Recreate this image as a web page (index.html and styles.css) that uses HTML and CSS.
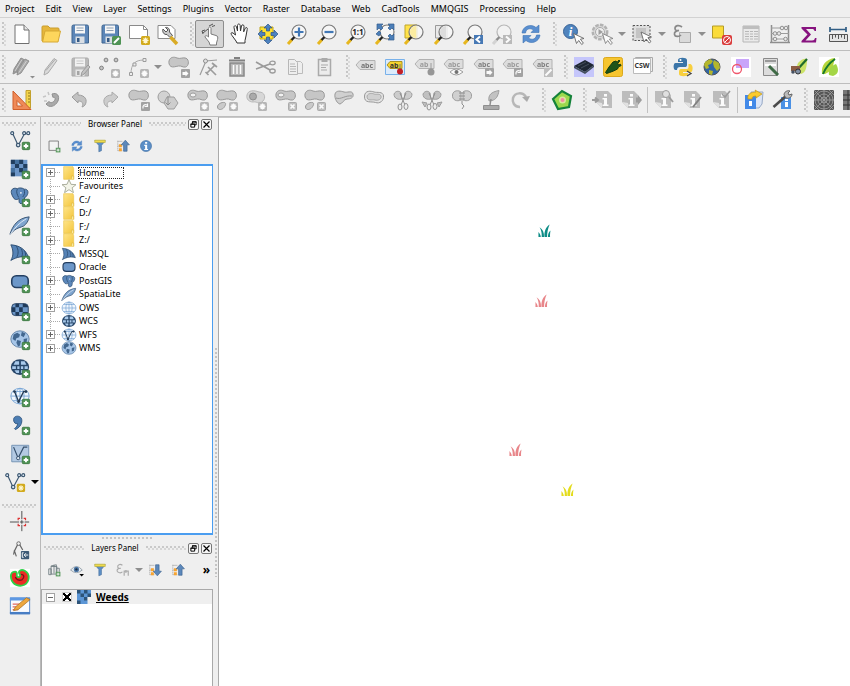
FILE: index.html
```html
<!DOCTYPE html>
<html lang="en">
<head>
<meta charset="utf-8">
<meta name="viewport" content="width=device-width, initial-scale=1">
<title>Weeds</title>
<link rel="stylesheet" href="styles.css">
</head>
<body>
<svg class="sprite" aria-hidden="true">
  <defs>
    <linearGradient id="gold" x1="0" y1="0" x2="1" y2="1"><stop offset="0" stop-color="#ffe58a"/><stop offset="1" stop-color="#f3c53c"/></linearGradient>
    <!-- badges -->
    <g id="plus"><rect x="14.500" y="14.500" width="8" height="8" rx="1" fill="#4f9355" stroke="#3c7a42"/><path d="M18.500 16v5M16 18.500h5" stroke="#fff" stroke-width="2"/></g>
    <g id="star"><rect x="14" y="14" width="9" height="9" rx="1.500" fill="#d2aa1c"/><path d="M18.500 15.500v6M15.500 18.500h6M16.500 16.500l4 4M20.500 16.500l-4 4" stroke="#fff6cf" stroke-width="1.200"/></g>
    <g id="star-off"><rect x="14" y="14" width="9" height="9" rx="1.500" fill="#a8a8a8"/><path d="M18.500 15.500v6M15.500 18.500h6M16.500 16.500l4 4M20.500 16.500l-4 4" stroke="#fff" stroke-width="1.500"/></g>
    <g id="cross-off"><rect x="14.500" y="14.500" width="8" height="8" rx="1" fill="#b4b4b4" stroke="#999"/><path d="M16.500 16.500l4 4M20.500 16.500l-4 4" stroke="#fff" stroke-width="1.700"/></g>
    <g id="move-off"><rect x="14" y="14" width="9" height="9" rx="1" fill="#8f8f8f"/><path d="M15.500 17h3v-1.500l3 3-3 3V20h-3z" fill="#fff"/></g>
    <g id="turn-off"><rect x="14" y="14" width="9" height="9" rx="1" fill="#8f8f8f"/><path d="M16 20.500c-.5-3 1.500-4.500 4-3.500M20.500 15.500v3h-3" fill="none" stroke="#fff" stroke-width="1.200"/></g>
    <!-- editing -->
    <g id="blob"><path d="M2 6c1-4 5-4.500 8-3 3 1.300 6-1 9 .2 3.500 1.500 3 8-.5 8.800-3 .6-4-1.500-7-1-3.500.6-5.500 1.500-7.500.5C2.300 10.500 1.500 8 2 6z" fill="#bdbdbd" stroke="#828282"/></g>
    <g id="lobe"><path d="M2.500 19c0-3 4-5 7-4.500 2 .5 1 3-.5 5s-6 3.500-6.500-.5z" fill="#c2c2c2" stroke="#828282"/></g>
    <g id="doc-i"><path d="M4 3h12l4 4v13H10l-6-6z" fill="#b0b0b0"/><path d="M4 14l6 6v-5z" fill="#dedede"/><path d="M12 6h3v2.500h-3zM10.500 10H15v6.500h1.500V18h-6v-1.500H12V11.500h-1.500z" fill="#fff"/></g>
    <g id="tag"><path d="M2 11l4-4.500h15v9H6z" fill="#d9d9d9" stroke="#a2a2a2"/></g>
    <g id="ptr"><path d="M0 0l3 10 2.200-3 3 4 1.700-1.300-3-4L10.500 5z" fill="#fff" stroke="#666" stroke-width=".9"/></g>
    <!-- map navigation -->
    <g id="grip-lens"><path d="M3 22l4-4.500" stroke="#e7b71e" stroke-width="3"/><path d="M6.500 18l3-3" stroke="#222" stroke-width="2.400"/></g>
    <g id="lens"><circle cx="14" cy="10" r="7" fill="#f7f7f7" fill-opacity=".8" stroke="#7b7b7b" stroke-width="1.200"/><use href="#grip-lens"/></g>
    <g id="floppy"><path d="M4 4.500q0-1.500 1.500-1.500H19q1.500 0 1.500 1.500V21H4z" fill="#5c86b8" stroke="#3f658f"/><path d="M7 3.500h10v8H7z" fill="#f6f6f6"/><path d="M8.500 6h7M8.500 8.500h7" stroke="#8fa1b4"/><path d="M7.500 14.500h9V21h-9z" fill="#d9dee4"/><path d="M9 16h2.500v4H9z" fill="#355a85"/></g>
    <g id="refresh" fill="#5a8fd0" stroke="#3e74b4" stroke-width=".6"><path d="M3 11C3.500 4.500 11.500 1 17 5.500L20 3v7.500h-8l2.500-2.500C11 5.500 7 7 6.500 11z"/><path d="M21 13c-.5 6.500-8.500 10-14 5.500L4 21v-7.500h8L9.500 16c3.500 2.500 7.500 1 8-3z"/></g>
    <!-- data sources -->
    <g id="vector" fill="none" stroke="#3e5871" stroke-width="1.300"><path d="M4 5l6 13L17 5h3"/><g fill="#dce8f3"><circle cx="3.500" cy="4.500" r="1.600"/><circle cx="10" cy="17.500" r="1.900"/><circle cx="16.500" cy="4.500" r="1.600"/><circle cx="21" cy="4.500" r="1.600"/></g></g>
    <g id="raster"><path d="M2 2h18v18H2z" fill="#6d96c8"/><path d="M2 2h4.500v4.500H2zM11 2h4.500v4.500H11zM6.500 6.500H11V11H6.500zM15.500 6.500H20V11h-4.500zM11 11h4.500v4.500H11zM2 15.500h4.500V20H2z" fill="#213e5f"/><path d="M6.500 2H11v4.500H6.500zM2 11h4.500v4.500H2zM15.500 11H20v4.500h-4.500z" fill="#45719f"/></g>
    <g id="elephant"><path d="M2.500 7C2 3 6 1.500 9 3c2-1.500 6-1 7.500.5 4-.5 5 3 3.500 6-.8 2-2 3-3 3l-.3 3.500c-.2 4-6 4.500-5.700.5v-3c-1.500 1.500-4.500 2-6-.5C3.800 11 2.800 9.500 2.500 7z" fill="#5c88bb" stroke="#2c4b6e"/><path d="M9 3.500c-1.500 3 0 6 1.500 9M16.500 4c1 3 .5 5.500-1.500 8" fill="none" stroke="#2c4b6e"/><circle cx="13" cy="7.500" r=".9" fill="#fff"/></g>
    <g id="feather"><path d="M1 21C4 12 9 3.500 22 2c-.5 4-3 8-6 10-3 1.500-7 2-10 4.500z" fill="#7fa5cf" stroke="#34506f"/><path d="M1.500 21C6 14 12 8 19 4" fill="none" stroke="#e6eff8"/></g>
    <g id="sail"><path d="M2 2c9 .5 16 4.500 19.500 14C15 14 9 15 2 19c3-5 3-11 0-17z" fill="#5683b6" stroke="#2c4b6e"/><path d="M8 3.500c2.500 4 2.500 8 .5 12M13 6c2 3 2 6 1 9M17 9c1.200 2 1.200 4 1 6" fill="none" stroke="#2c4b6e"/></g>
    <g id="oracle"><rect x="3" y="4" width="18" height="13" rx="5" fill="#6c97c9" stroke="#243f61" stroke-width="1.700"/></g>
    <g id="georaster"><rect x="3" y="4" width="18" height="13" rx="4" fill="#6c97c9" stroke="#243f61"/><path d="M7 4h4v4H7zM15 4h3l3 3v1h-6zM3 8h4v5H3zM11 8h4v5h-4zM7 13h4v4H7zM15 13h6l-3 4h-3z" fill="#1f3a5a"/></g>
    <g id="world"><ellipse cx="12" cy="11" rx="10" ry="9" fill="#a7c6e8" stroke="#6283a6"/><path d="M5 6l4-2 3 2-1 3-3 1-1 3-3-2zM14 3l4 2-2 4-3-2zM9 12l4 1-1 5-2 1-2-4zM16 11l4-1-1 5-3 1z" fill="#42678f"/></g>
    <g id="globe-dark"><ellipse cx="12" cy="11" rx="10" ry="8.500" fill="#29486b"/><path d="M7 4.500h4v4H5zM13 4.500h4l2 4h-6zM3.500 10h4v3h-4zM9 10h2.500v3H9zM13 10h2.500v3H13zM17 10h3.500v3H17zM6 14.500h5v3H8zM13 14.500h5l-2 3h-3z" fill="#a9caec"/></g>
    <g id="globe-light" fill="none" stroke="#79a5d4"><ellipse cx="12" cy="11" rx="10" ry="8.500" fill="#f1f7fd"/><ellipse cx="12" cy="11" rx="4.500" ry="8.500"/><path d="M2 11h20M4.500 6h15M4.500 16h15M12 2.500v17"/></g>
    <g id="globe-v"><use href="#globe-light"/><path d="M6 6l4.500 11L16 6h3" fill="none" stroke="#253c55" stroke-width="1.400"/><circle cx="6" cy="6" r="1.500" fill="#253c55"/><circle cx="10.500" cy="17" r="1.500" fill="#253c55"/><circle cx="18.500" cy="6" r="1.500" fill="#253c55"/></g>
    <g id="folder"><path d="M4 1h14l1 3v16H4z" fill="url(#gold)" stroke="#ecc64c"/><path d="M16 19v-4h3v5" fill="#fff0a8" stroke="#e0b63a"/></g>
    <g id="funnel"><path d="M3 3h18l-6.500 8v9L10 22V11z" fill="#5d8fc6" stroke="#466f9b"/><path d="M3 2h18v4H3z" fill="#efdc4b" stroke="#b9a93a"/></g>
    <g id="rows"><path d="M3 3v18" stroke="#8c8c8c" stroke-dasharray="2 1"/><path d="M3 4h8M3 12h8M3 20h8" stroke="#9a9a9a"/><path d="M5 9h5v5H5zM5 16h5v5H5z" fill="#f7a430"/></g>
    <g id="grass"><path d="M.5 14V8.500C2 10 3 12 3 14zM4 14c.2-4-.3-7-2.300-10.500C5 5.500 6.700 9 6.500 14zM7 14C6.500 8 8.500 3 12.500.5 10.700 5 9.800 9 9.800 14zM10.700 14c0-3 .8-5.500 2.800-7-.5 2.500-.6 5-.5 7z"/></g>
  </defs>
</svg>

<nav class="menubar" aria-label="Main menu">
  <button type="button">Project</button><button type="button">Edit</button><button type="button">View</button><button type="button">Layer</button><button type="button">Settings</button><button type="button">Plugins</button><button type="button">Vector</button><button type="button">Raster</button><button type="button">Database</button><button type="button">Web</button><button type="button">CadTools</button><button type="button">MMQGIS</button><button type="button">Processing</button><button type="button">Help</button>
</nav>

<div class="toolbar-row" role="toolbar" aria-label="Project and navigation">
  <span class="handle"></span>
  <div class="tools tools-file">
    <button class="tool" type="button" aria-label="New"><svg viewBox="0 0 24 24"><path d="M5 3h9l5 5v13.500H5z" fill="#fff" stroke="#707070"/><path d="M14 3v5h5" fill="#e5e5e5" stroke="#707070"/></svg></button>
    <button class="tool" type="button" aria-label="Open"><svg viewBox="0 0 24 24"><path d="M3 19V5q0-1 1-1h5l2 2h8q1 0 1 1v3z" fill="#e6b63c" stroke="#c99d2c"/><path d="M6 9h15.500L19 20H3.500z" fill="#fdd65c" stroke="#d6a934"/></svg></button>
    <button class="tool" type="button" aria-label="Save"><svg viewBox="0 0 24 24"><use href="#floppy"/></svg></button>
    <button class="tool" type="button" aria-label="Save as"><svg viewBox="0 0 24 24"><use href="#floppy"/><rect x="14" y="14" width="9" height="9" rx="1.500" fill="#4f9355"/><path d="M16 21l5-5" stroke="#fff" stroke-width="2"/></svg></button>
    <button class="tool" type="button" aria-label="New print layout"><svg viewBox="0 0 24 24"><path d="M2.500 3.500h14l4 4v9h-18z" fill="#fff" stroke="#8a8a8a"/><path d="M16.500 3.500v4h4" fill="none" stroke="#8a8a8a"/><use href="#star"/></svg></button>
    <button class="tool" type="button" aria-label="Layout manager"><svg viewBox="0 0 24 24"><path d="M2 3.500h13l4 4v9H2z" fill="#fff" stroke="#8a8a8a"/><path d="M7 7c-1 3 1 6 4 5.500l3 3 2.500-2-3-3.500C14 7 12 5 9.500 5.500L12 8l-2 2z" fill="#c9c9c9" stroke="#555"/><path d="M14.500 15l6.500 7" stroke="#d9ab26" stroke-width="3.500"/></svg></button>
  </div>
  <span class="handle"></span>
  <div class="tools tools-navigation">
    <button class="tool is-active" type="button" aria-label="Touch zoom" aria-pressed="true"><svg viewBox="0 0 24 24"><path d="M5 11l5-4M11 4l4-2M7 8l-3 1 1 3M14 4.500l3-1" stroke="#555" fill="none"/><path d="M11 20l-4-5c0-2 2-1.500 3.500 0V6.500c0-2 2.500-2 2.500 0V12l5 1.500c2 .5 2 2 1.500 4L18.500 21v2H12z" fill="#fff" stroke="#7c7c7c"/></svg></button>
    <button class="tool" type="button" aria-label="Pan"><svg viewBox="0 0 24 24"><path d="M9 19l-4-5.500C3.500 11.500 4 10 6 11l2.500 2L7 5.500c-.3-2 2-2.500 2.500-.5L10.500 9V3.500c0-2 2.500-2 2.700 0L13.500 9l1-5c.3-1.800 2.500-1.500 2.500.3l-.3 5.500 1.500-3.500c1-1.500 2.600-.6 2 1.200L19 14l-1 4.500V21H10z" fill="#fff" stroke="#333"/></svg></button>
    <button class="tool" type="button" aria-label="Pan to selection"><svg viewBox="0 0 24 24"><path d="M4 5h13v12H4z" fill="#ffe12f" stroke="#bda31a"/><path d="M12 2l4 4h-2.500v3h-3V6H8zM12 22l-4-4h2.500v-3h3v3H16zM2 12l4-4v2.500h3v3H6V16zM22 12l-4 4v-2.500h-3v-3h3V8z" fill="#4d82c0" stroke="#2e5587" stroke-width=".7"/></svg></button>
    <button class="tool" type="button" aria-label="Zoom in"><svg viewBox="0 0 24 24"><use href="#lens"/><path d="M14 5.500v9M9.500 10h9" stroke="#4177b5" stroke-width="2.200"/></svg></button>
    <button class="tool" type="button" aria-label="Zoom out"><svg viewBox="0 0 24 24"><use href="#lens"/><path d="M9.500 10h9" stroke="#4177b5" stroke-width="2.200"/></svg></button>
    <button class="tool" type="button" aria-label="Zoom to native resolution"><svg viewBox="0 0 24 24"><use href="#lens"/><text x="14" y="13" class="glyph glyph-bold" font-size="8" text-anchor="middle" fill="#222">1:1</text></svg></button>
    <button class="tool" type="button" aria-label="Zoom full"><svg viewBox="0 0 24 24"><use href="#lens"/><path d="M4 2h6L8 4l2 2-2 2-2-2-2 2zM21 2v6l-2-2-2 2-2-2 2-2-2-2zM21 18h-6l2-2-2-2 2-2 2 2 2-2zM3 12l3-3 2 2-2 3z" fill="#4b7eb8" stroke="#335d8e" stroke-width=".7"/></svg></button>
    <button class="tool" type="button" aria-label="Zoom to selection"><svg viewBox="0 0 24 24"><path d="M3 3h12v13H3z" fill="#ffe24a" stroke="#bfa52a"/><use href="#lens"/><path d="M8 10a6 6 0 0 1 6-6v12a6 6 0 0 1-6-6" fill="#fbeca0"/></svg></button>
    <button class="tool" type="button" aria-label="Zoom to layer"><svg viewBox="0 0 24 24"><path d="M3.500 3.500H15V16H3.500z" fill="#e9e9e9" stroke="#9a9a9a"/><use href="#lens"/><path d="M8 10a6 6 0 0 1 6-6v12a6 6 0 0 1-6-6" fill="#dcdcdc"/></svg></button>
    <button class="tool" type="button" aria-label="Zoom last"><svg viewBox="0 0 24 24"><use href="#lens"/><path d="M13 13h9v9h-9z" fill="#4779b5"/><path d="M19 14.500l-3.500 3L19 20.500" stroke="#fff" stroke-width="2" fill="none"/></svg></button>
    <button class="tool" type="button" aria-label="Zoom next" disabled><svg viewBox="0 0 24 24"><use href="#lens" class="faded"/><path d="M13 13h9v9h-9z" fill="#acacac"/><path d="M16 14.500l3.500 3-3.500 3" stroke="#fff" stroke-width="2" fill="none"/></svg></button>
    <button class="tool" type="button" aria-label="Refresh"><svg viewBox="0 0 24 24"><use href="#refresh"/></svg></button>
  </div>
  <span class="handle"></span>
  <div class="tools">
    <button class="tool" type="button" aria-label="Identify"><svg viewBox="0 0 24 24"><circle cx="9.500" cy="9.500" r="7" fill="#4f84be" stroke="#3a6496"/><text x="9.500" y="14" class="glyph-serif" text-anchor="middle" fill="#fff">i</text><use href="#ptr" x="12.500" y="11.500"/></svg></button>
    <button class="tool" type="button" aria-label="Run action" disabled><svg viewBox="0 0 24 24"><circle cx="10" cy="10" r="7.200" fill="#d7d7d7" stroke="#a4a4a4" stroke-width="2.500" stroke-dasharray="3.600 1.200"/><circle cx="10" cy="10" r="4.500" fill="#eee" stroke="#999"/><path d="M8.500 7l4.500 3-4.500 3z" fill="#8b8b8b"/><use href="#ptr" x="12.500" y="11.500"/></svg></button>
    <button class="drop" type="button" aria-label="Actions" disabled></button>
    <button class="tool" type="button" aria-label="Select features"><svg viewBox="0 0 24 24"><path d="M3 3.500h17v15H3z" fill="#ddd" stroke="#555" stroke-dasharray="2 1.500"/><path d="M6 6h10v10H6z" fill="#c4c4c4"/><use href="#ptr" x="11" y="10"/></svg></button>
    <button class="drop" type="button" aria-label="Selection tools"></button>
    <button class="tool" type="button" aria-label="Select by expression"><svg viewBox="0 0 24 24"><path d="M9.500 10.500h11v10h-11z" fill="#dadada" stroke="#aaa"/><path d="M12 5c-3-2.500-7-1.500-7 1.500C5 8.500 7 9 9 8.500 6 9 4 10 4.500 12.500 5 15 9 15 11 13" fill="none" stroke="#898989" stroke-width="1.700"/></svg></button>
    <button class="drop" type="button" aria-label="Expression tools"></button>
    <button class="tool" type="button" aria-label="Deselect all"><svg viewBox="0 0 24 24"><path d="M2.500 4h11v12h-11z" fill="#fbdc3a" stroke="#b59c26"/><rect x="12" y="13" width="10" height="10" rx="2" fill="#da3b3b"/><circle cx="17" cy="18" r="3.500" fill="none" stroke="#fff"/><path d="M14.500 20.500l5-5" stroke="#fff"/></svg></button>
    <button class="tool" type="button" aria-label="Attribute table" disabled><svg viewBox="0 0 24 24"><path d="M4 4h16v16H4z" fill="#e9e9e9" stroke="#a9a9a9"/><path d="M4 4h16v3H4z" fill="#b3b3b3"/><path d="M6 9.500h4M11 9.500h3M15 9.500h4M6 12h4M11 12h3M15 12h4M6 14.500h4M11 14.500h3M15 14.500h4M6 17h4M11 17h3M15 17h4" stroke="#aaa"/></svg></button>
    <button class="tool" type="button" aria-label="Field calculator" disabled><svg viewBox="0 0 24 24"><path d="M3.500 3v18M20.500 3v18M2 20.500h20" stroke="#777" stroke-width="1.500"/><path d="M3 6h18M3 11.500h18M3 17h18" stroke="#888"/><g fill="#e6e6e6" stroke="#777"><circle cx="14" cy="6" r="1.800"/><circle cx="18" cy="6" r="1.800"/><circle cx="7" cy="11.500" r="1.800"/><circle cx="11" cy="11.500" r="1.800"/><circle cx="7" cy="17" r="1.800"/><circle cx="17.500" cy="17" r="1.800"/></g></svg></button>
    <button class="tool" type="button" aria-label="Statistics"><svg viewBox="0 0 24 24"><path d="M4.500 5H19v4h-1.500c-.3-1.500-1-2-2.500-2H9l5 5.500L8.500 18.500H15c2 0 2.500-.8 3-2.500h1.500L19 20.500H4.500V19l6-6.500-6-6z" fill="#87137f"/></svg></button>
    <button class="tool" type="button" aria-label="Measure"><svg viewBox="0 0 24 24"><path d="M4 5v5M20 5v5M4 7.500h16" stroke="#315e85" stroke-width="1.700"/><path d="M3.500 12.500h18v7h-18z" fill="#e4e4e4" stroke="#555"/><path d="M6.500 13v4M9.500 13v2.500M12.500 13v4M15.500 13v2.500M18.500 13v4" stroke="#555"/></svg></button>
  </div>
</div>

<div class="toolbar-row" role="toolbar" aria-label="Digitizing and labels">
  <span class="handle"></span>
  <div class="tools tools-digitize">
    <button class="tool" type="button" aria-label="Current edits" disabled><svg viewBox="0 0 24 24"><path d="M3 19l1-5L11 3l3 1.500L7 17z" fill="#888" stroke="#777"/><path d="M7 20l1-5L15 4l4 2-8 12z" fill="#9b9b9b" stroke="#777"/><path d="M12 4.500L5 16M16.500 6L9 17.500" stroke="#c9c9c9"/><path d="M20 21h5l-2.500 2.500z" fill="#777"/></svg></button>
    <button class="tool" type="button" aria-label="Toggle editing" disabled><svg viewBox="0 0 24 24"><path d="M5 20l1-5L15 3.500 18 5.500 9 18z" fill="#d5d5d5" stroke="#999"/><path d="M7 15.500L16 4.500" stroke="#999"/></svg></button>
    <button class="tool" type="button" aria-label="Save edits" disabled><svg viewBox="0 0 24 24"><use href="#floppy" class="grey"/><path d="M13 21l1-4 6-7 2 2-6 7z" fill="#b9b9b9" stroke="#858585"/></svg></button>
    <button class="tool" type="button" aria-label="Add point feature" disabled><svg viewBox="0 0 24 24"><g fill="#bbb" stroke="#666"><circle cx="9" cy="5" r="1.900"/><circle cx="19" cy="5" r="1.900"/><circle cx="4.500" cy="13" r="1.900"/></g><use href="#star-off"/></svg></button>
    <button class="tool" type="button" aria-label="Add circular string" disabled><svg viewBox="0 0 24 24"><path d="M5 19C5 9 9 5 18 5" fill="none" stroke="#999"/><g fill="#eee" stroke="#888"><path d="M3.500 17.500h3v3h-3zM7 8h3v3H7zM17 3.500h3v3h-3z"/></g><use href="#star-off"/></svg></button>
    <button class="drop" type="button" aria-label="Circular string tools" disabled></button>
    <button class="tool" type="button" aria-label="Move feature" disabled><svg viewBox="0 0 24 24"><use href="#blob"/><use href="#move-off"/></svg></button>
    <button class="tool" type="button" aria-label="Node tool" disabled><svg viewBox="0 0 24 24"><path d="M4 20L10 6l11-1M8 5l2 1" fill="none" stroke="#888" stroke-width="1.200"/><circle cx="9.500" cy="6" r="2" fill="#ddd" stroke="#777"/><path d="M12 12l8 8M19 10l-8 8M16 8l5 4M9.500 17l3 3" stroke="#888" stroke-width="1.700"/></svg></button>
    <button class="tool" type="button" aria-label="Delete selected" disabled><svg viewBox="0 0 24 24"><path d="M5 8h14v13H5z" fill="#aaa" stroke="#6f6f6f" stroke-width="1.500"/><path d="M8.500 10v9M12 10v9M15.500 10v9" stroke="#fff" stroke-width="1.500"/><path d="M4 5.500h16M9 3h6" stroke="#666" stroke-width="2"/></svg></button>
    <button class="tool" type="button" aria-label="Cut" disabled><svg viewBox="0 0 24 24"><path d="M2 7l14 8M2 14l14-5" stroke="#858585" stroke-width="1.700"/><ellipse cx="18.500" cy="8" rx="2.700" ry="1.800" fill="none" stroke="#858585" stroke-width="1.300"/><ellipse cx="18.500" cy="16" rx="2.700" ry="2" fill="none" stroke="#858585" stroke-width="1.300"/></svg></button>
    <button class="tool" type="button" aria-label="Copy" disabled><svg viewBox="0 0 24 24"><path d="M10.500 6.500h7l2 2v10h-9z" fill="#eee" stroke="#b0b0b0"/><path d="M5.500 4.500h6l3 3v12h-9z" fill="#eee" stroke="#aaa"/><path d="M7 9h5M7 11.500h6M7 14h6M7 16.500h6" stroke="#aaa"/></svg></button>
    <button class="tool" type="button" aria-label="Paste" disabled><svg viewBox="0 0 24 24"><path d="M6.500 4.500h12v16h-12z" fill="#ececec" stroke="#999" stroke-width="1.500"/><path d="M9.500 3h6v4h-6z" fill="#999"/><path d="M9 10h7M9 12.500h5M9 15h6" stroke="#999"/></svg></button>
  </div>
  <span class="handle"></span>
  <div class="tools tools-labels">
    <button class="tool" type="button" aria-label="Label options" disabled><svg viewBox="0 0 24 24"><g transform="translate(0 -1)"><use href="#tag"/><text x="13" y="13.500" class="glyph glyph-bold" font-size="7" text-anchor="middle" fill="#555">abc</text></g></svg></button>
    <button class="tool" type="button" aria-label="Highlight pinned labels"><svg viewBox="0 0 24 24"><path d="M2.500 4.500h19v15h-19z" fill="#dcebfb" stroke="#78b1ea"/><path d="M4 10l3-3.500h12v7H7z" fill="#f7d52c" stroke="#aa9223"/><text x="11" y="13" class="glyph glyph-bold" font-size="7" text-anchor="middle" fill="#333">ab</text><path d="M17 9v5" stroke="#777"/><circle cx="17" cy="16.500" r="3" fill="#c21f27"/></svg></button>
    <button class="tool" type="button" aria-label="Pin labels" disabled><svg viewBox="0 0 24 24"><g transform="translate(0 -2)"><use href="#tag"/><text x="11" y="13.500" class="glyph glyph-bold" font-size="7" text-anchor="middle" fill="#888">ab</text></g><path d="M18 8v6" stroke="#888"/><circle cx="18" cy="17" r="3.500" fill="#808080"/></svg></button>
    <button class="tool" type="button" aria-label="Show or hide labels" disabled><svg viewBox="0 0 24 24"><g transform="translate(0 -2)"><use href="#tag"/><text x="12" y="13.500" class="glyph glyph-bold" font-size="7" text-anchor="middle" fill="#888">abc</text></g><path d="M8 17q6-6 13 0-7 6-13 0z" fill="#fff" stroke="#888"/><circle cx="14.500" cy="17" r="2" fill="#555"/></svg></button>
    <button class="tool" type="button" aria-label="Move label" disabled><svg viewBox="0 0 24 24"><g transform="translate(0 -2)"><use href="#tag"/><text x="12" y="13.500" class="glyph glyph-bold" font-size="7" text-anchor="middle" fill="#666">abc</text></g><use href="#move-off" x="-1" y="-1"/></svg></button>
    <button class="tool" type="button" aria-label="Rotate label" disabled><svg viewBox="0 0 24 24"><g transform="translate(0 -2)"><use href="#tag"/><text x="12" y="13.500" class="glyph glyph-bold" font-size="7" text-anchor="middle" fill="#888">abc</text></g><use href="#turn-off" x="-1" y="-1"/></svg></button>
    <button class="tool" type="button" aria-label="Change label" disabled><svg viewBox="0 0 24 24"><g transform="translate(0 -2)"><use href="#tag"/><text x="12" y="13.500" class="glyph glyph-bold" font-size="7" text-anchor="middle" fill="#666">abc</text></g><path d="M13 13h9v9h-9z" fill="#b2b2b2"/><path d="M14.500 20.500l6-6" stroke="#fff" stroke-width="2"/></svg></button>
  </div>
  <span class="handle"></span>
  <div class="tools">
    <button class="tool" type="button" aria-label="Terrain plugin"><svg viewBox="0 0 24 24"><path d="M2 2h20v20H2z" fill="#c5c6fb"/><path d="M2 11L13 5l9 5-9 7z" fill="#1e2733"/><path d="M2 11v2l11 6 9-7v-2l-9 7z" fill="#44505e"/><path d="M6 11l8-4M9 13l8-4" stroke="#45505d"/></svg></button>
    <button class="tool" type="button" aria-label="Plugin manager"><svg viewBox="0 0 24 24"><rect x="2.500" y="2.500" width="19" height="19" rx="2" fill="#f6c52f" stroke="#dca91c"/><path d="M8 12l4-5 3-1 1 1.500L18 5l.8 1-2 2.300L17.500 10l2-.7.6 1.300-2.600 1.200-1 2.200-4 2-4 1.500-3 1-1-1z" fill="#1d5419" stroke="#123b10"/></svg></button>
    <button class="tool" type="button" aria-label="Metadata search"><svg viewBox="0 0 24 24"><path d="M5.500 3.500v-1h17v14h-2" fill="none" stroke="#aaa"/><path d="M3.500 3.500h17v15h-17z" fill="#fff" stroke="#bbb"/><text x="12" y="13" class="glyph glyph-bold" font-size="7" text-anchor="middle" fill="#333">CSW</text></svg></button>
  </div>
  <span class="handle"></span>
  <div class="tools tools-plugins">
    <button class="tool" type="button" aria-label="Python console"><svg viewBox="0 0 24 24"><path d="M7 7V5c0-3 9-3 9 0v5c0 1.500-1 2-2 2H9c-2 0-3 1-3 3H4.500C2 15 2 8 4.500 8H12V7z" fill="#3b75a8"/><path d="M8 17v2c0 3 9 3 9 0v-1h-5v-1h8c2 0 2.500-7-.5-8H17.500v3c0 1.500-1 2-2 2H10c-1.500 0-2 1-2 3z" fill="#f8cf3e"/><circle cx="9.500" cy="5" r="1" fill="#fff"/><path d="M16 16l4 2.500-4 2.500" fill="none" stroke="#444" stroke-width="1.300"/></svg></button>
    <button class="tool" type="button" aria-label="Globe"><svg viewBox="0 0 24 24"><circle cx="12" cy="12" r="8" fill="#3166a5" stroke="#555"/><path d="M5 7l5-3 3 2-2 3-3 1 1 3-3 1-2-4zM14 5l5 3 1 5-3 3-3-4-1-4zM9 15l4 1-1 4-3-1z" fill="#b4b62c"/></svg></button>
    <button class="tool" type="button" aria-label="Geometry plugin"><svg viewBox="0 0 24 24"><path d="M2 2h20v20H2z" fill="#fff"/><path d="M7 4h13v9H7z" fill="#c9a5fa"/><circle cx="8" cy="14" r="4.500" fill="none" stroke="#f0566c" stroke-width="1.300"/></svg></button>
    <button class="tool" type="button" aria-label="Form editor"><svg viewBox="0 0 24 24"><path d="M4.500 3.500h14v17h-14z" fill="#dcdcdc" stroke="#8a8a8a"/><path d="M6 5h11v2H6z" fill="#999"/><path d="M6 9h11v2H6z" fill="#fff"/><path d="M10 11l9 9" stroke="#3f6b46" stroke-width="3"/></svg></button>
    <button class="tool" type="button" aria-label="Vehicle plugin"><svg viewBox="0 0 24 24"><path d="M10 8C13 4 17 3 19 4c0 7-1 14-6 15-4-2-5-7-3-11z" fill="#cbe267"/><path d="M19 4L9 15" stroke="#206b2c" stroke-width="2.200"/><path d="M3 11h9v5H3z" fill="#8c5d43"/><circle cx="10" cy="16.500" r="2.500" fill="#8190a5" stroke="#333"/><circle cx="5" cy="17" r="1.800" fill="#455061"/></svg></button>
    <button class="tool" type="button" aria-label="Leaf plugin"><svg viewBox="0 0 24 24"><path d="M2 2h20v20H2z" fill="#fff"/><path d="M5 19C4 10 9 4 18 3 16 9 17 15 8 19z" fill="#b6d63b"/><path d="M12 20c-1-6 2-9 7-11 3 5 3 10-3 12z" fill="#a4d646"/><path d="M18 4C11 9 8 14 6 19" fill="none" stroke="#16792c" stroke-width="2"/></svg></button>
  </div>
</div>

<div class="toolbar-row" role="toolbar" aria-label="Advanced digitizing">
  <span class="handle"></span>
  <div class="tools tools-advanced">
    <button class="tool" type="button" aria-label="CAD tools"><svg viewBox="0 0 24 24"><path d="M16 2.500h4.500V20H16z" fill="#f4d44c" stroke="#c2a12c"/><path d="M18 5h2M18 8h2M18 11h2M18 14h2" stroke="#8d7620"/><path d="M3 3l18 18.500H3zM7 12.500V18h5.500z" fill="#ef8a58" fill-rule="evenodd" stroke="#cf5f2a"/></svg></button>
    <button class="tool" type="button" aria-label="Snapping" disabled><svg viewBox="0 0 24 24"><path d="M13 6c5-2 8 2 6 7-3 6-9 7-12 3l3-2.500c2 2 4 1 5.500-1s0-4-1.500-3z" fill="#999" stroke="#777"/><path d="M4 9l3-1M5 13h3M9 4l1 3" stroke="#bbb" stroke-width="1.500"/></svg></button>
    <button class="tool" type="button" aria-label="Undo" disabled><svg viewBox="0 0 24 24"><path d="M4 9l6-5v3c7 0 10 5 7 10-1 1.500-3 2-3 2 2-4 0-6-4-6v2z" fill="#b7b7b7" stroke="#888"/></svg></button>
    <button class="tool" type="button" aria-label="Redo" disabled><svg viewBox="0 0 24 24"><path d="M20 9l-6-5v3C7 7 4 12 7 17c1 1.500 3 2 3 2-2-4 0-6 4-6v2z" fill="#c5c5c5" stroke="#999"/></svg></button>
    <button class="tool" type="button" aria-label="Rotate feature" disabled><svg viewBox="0 0 24 24"><use href="#blob"/><use href="#turn-off"/></svg></button>
    <button class="tool" type="button" aria-label="Simplify feature" disabled><svg viewBox="0 0 24 24"><circle cx="8" cy="9" r="6" fill="#ccc" stroke="#888"/><path d="M11 9h7l4 6-4 6h-6l-4-6z" fill="#c5c5c5" stroke="#888"/><path d="M12 8v9M9.500 14.500L12 17l2.500-2.500" fill="none" stroke="#777"/></svg></button>
    <button class="tool" type="button" aria-label="Add ring" disabled><svg viewBox="0 0 24 24"><use href="#blob"/><ellipse cx="7" cy="7" rx="3" ry="2" fill="#f3f3f3" stroke="#888"/><use href="#star-off"/></svg></button>
    <button class="tool" type="button" aria-label="Add part" disabled><svg viewBox="0 0 24 24"><use href="#blob"/><use href="#lobe"/><use href="#star-off"/></svg></button>
    <button class="tool" type="button" aria-label="Fill ring" disabled><svg viewBox="0 0 24 24"><path d="M3 7c1-5 7-5 12-3 6 0 7 6 4 9-4 4-7 0-10 1-4 0-7-3-6-7z" fill="#d2d2d2" stroke="#aaa"/><circle cx="9" cy="8.500" r="3.500" fill="#999" stroke="#777"/><use href="#star-off"/></svg></button>
    <button class="tool" type="button" aria-label="Delete ring" disabled><svg viewBox="0 0 24 24"><use href="#blob"/><ellipse cx="7" cy="7" rx="3" ry="2" fill="#f3f3f3" stroke="#888"/><use href="#cross-off"/></svg></button>
    <button class="tool" type="button" aria-label="Delete part" disabled><svg viewBox="0 0 24 24"><use href="#blob"/><use href="#lobe"/><use href="#cross-off"/></svg></button>
    <button class="tool" type="button" aria-label="Reshape" disabled><svg viewBox="0 0 24 24"><path d="M3 6c1-4 6-3 9-2s8-2 9 2-3 5-6 5-5 5-7 5-6-5-5-10z" fill="#c9c9c9" stroke="#828282"/><path d="M4 10c5 2 9-3 16-2" fill="none" stroke="#828282"/></svg></button>
    <button class="tool" type="button" aria-label="Offset curve" disabled><svg viewBox="0 0 24 24"><path d="M2.500 8C3 2 9 3 12 4s9-1 9.500 4-4 8-8 6.500S2 16 2.500 8z" fill="#e2e2e2" stroke="#828282"/><path d="M5 8c1-3 5-3 7-2s6-1 7 2-3 5-6 4-8 2-8-4z" fill="#c9c9c9" stroke="#999"/></svg></button>
    <button class="tool" type="button" aria-label="Split features" disabled><svg viewBox="0 0 24 24"><path d="M3 6c2-4 6-3 7-1l1 6c-3 1-8 0-8-5zM21 6c-2-4-6-3-7-1l-1 6c3 1 8 0 8-5z" fill="#c4c4c4" stroke="#888"/><path d="M9 5l5 12M15 5l-5 12" stroke="#777"/><ellipse cx="9" cy="19" rx="2" ry="3" fill="#eee" stroke="#777"/><ellipse cx="15" cy="18.500" rx="2" ry="3" fill="#eee" stroke="#777"/></svg></button>
    <button class="tool" type="button" aria-label="Split parts" disabled><svg viewBox="0 0 24 24"><path d="M3 6c2-4 6-3 7-1l1 6c-3 1-8 0-8-5zM21 6c-2-4-6-3-7-1l-1 6c3 1 8 0 8-5zM2 14l5 1-2 4zM22 14l-5 1 2 4z" fill="#b5b5b5" stroke="#888"/><path d="M9 5l5 12M15 5l-5 12" stroke="#777"/><ellipse cx="9" cy="19" rx="2" ry="3" fill="#eee" stroke="#777"/><ellipse cx="15" cy="18.500" rx="2" ry="3" fill="#eee" stroke="#777"/></svg></button>
    <button class="tool" type="button" aria-label="Merge features" disabled><svg viewBox="0 0 24 24"><path d="M2.500 7C3 2 9 2 11 4v8c-4 2-9 0-8.500-5zM21.500 7C21 2 15 2 13 4v8c4 2 9 0 8.500-5z" fill="#c9c9c9" stroke="#888"/><path d="M9 5h6M9 8h6M9 11h6M12 12v4l2 2-2 3" stroke="#777" fill="none"/></svg></button>
    <button class="tool" type="button" aria-label="Merge attributes" disabled><svg viewBox="0 0 24 24"><path d="M10 13c-1-6 2-9 10-10.500-1 6-3 9-7 10z" fill="#b8b8b8" stroke="#888"/><path d="M12 11l-1 6" stroke="#777" stroke-width="1.500"/><path d="M4.500 17.500H20v4H4.500z" fill="#999" stroke="#777"/></svg></button>
    <button class="tool" type="button" aria-label="Rotate point symbols" disabled><svg viewBox="0 0 24 24"><path d="M12 19C6 19 4 14 5 10 7 4 15 4 18 9" fill="none" stroke="#aaa" stroke-width="2.500"/><path d="M14 9l8-1-3 6z" fill="#999"/></svg></button>
  </div>
  <span class="handle"></span>
  <div class="tools">
    <button class="tool" type="button" aria-label="Polygon plugin"><svg viewBox="0 0 24 24"><path d="M3 11L12 3l9 5-2 11-11 2z" fill="#9cd94d" stroke="#14823a" stroke-width="2.200"/><circle cx="12.500" cy="12" r="3.500" fill="#dde5a1"/><circle cx="12.500" cy="12" r="2" fill="#f18ca0"/></svg></button>
  </div>
  <span class="handle"></span>
  <div class="tools">
    <button class="tool" type="button" aria-label="Import info" disabled><svg viewBox="0 0 24 24"><use href="#doc-i" x="1"/><path d="M1 12h6M4 9.500L7 12l-3 2.500" stroke="#888" stroke-width="2" fill="none"/></svg></button>
    <button class="tool" type="button" aria-label="Export info" disabled><svg viewBox="0 0 24 24"><use href="#doc-i" x="-2"/><path d="M16 9.500h2V7l4 5-4 5v-2.500h-2z" fill="#888"/></svg></button>
    <span class="rule"></span>
    <button class="tool" type="button" aria-label="Find info" disabled><svg viewBox="0 0 24 24"><use href="#doc-i" x="-1"/><circle cx="14" cy="6" r="3.500" fill="#ddd" stroke="#888"/><path d="M17 9l4 5" stroke="#888" stroke-width="2"/></svg></button>
    <button class="tool" type="button" aria-label="Edit info" disabled><svg viewBox="0 0 24 24"><use href="#doc-i" x="-1"/><path d="M12 19l8-10" stroke="#666" stroke-width="2"/></svg></button>
    <button class="tool" type="button" aria-label="Validate info" disabled><svg viewBox="0 0 24 24"><use href="#doc-i" x="-1"/><path d="M12 6l3 3 5-6" stroke="#888" stroke-width="1.700" fill="none"/></svg></button>
    <span class="rule"></span>
    <button class="tool" type="button" aria-label="Load documents"><svg viewBox="0 0 24 24"><path d="M9 4h12l-1 12-3 4H9z" fill="#dce5f5" stroke="#97a9c6"/><path d="M3 7h11v14H3z" fill="#4289e8"/><path d="M6 11c-1-5 3-7 8-7l-1-2 7 4-6 4V8c-3 0-4 1-4 3z" fill="#fbcb2d" stroke="#c2981a" stroke-width=".7"/><path d="M7 13h3v5H7z" fill="#fff"/></svg></button>
    <button class="tool" type="button" aria-label="Configure"><svg viewBox="0 0 24 24"><path d="M10 9h10v12H10z" fill="#4b91e5"/><path d="M14 11h3v2h-3zM14 14h3v5h-3z" fill="#fff"/><path d="M2.500 19L15 8" stroke="#4b4b4b" stroke-width="2.600"/><path d="M13 7c0-3 3-5 6-4l-2 2 1 2 3-1c0 3-3 5-6 4z" fill="#bbb" stroke="#666"/></svg></button>
  </div>
  <span class="handle"></span>
  <div class="tools">
    <button class="tool" type="button" aria-label="Texture pattern"><svg viewBox="0 0 24 24"><path d="M2 2h20v20H2z" fill="#555"/><g fill="none" stroke="#aaa" stroke-width=".7"><circle cx="12" cy="12" r="3"/><circle cx="12" cy="12" r="6"/><circle cx="12" cy="12" r="9"/><path d="M2 2l20 20M22 2L2 22M12 2v20M2 12h20M2 7l5-5M17 2l5 5M2 17l5 5M17 22l5-5"/></g></svg></button>
    <button class="tool" type="button" aria-label="Texture grid"><svg viewBox="0 0 24 24"><path d="M2 2h20v20H2z" fill="#777"/><path d="M2 7h20M2 12h20M2 17h20M7 2v20M12 2v20M17 2v20" stroke="#333" fill="none"/></svg></button>
  </div>
</div>

<main class="workspace">
  <aside class="sidebar" aria-label="Manage layers">
    <span class="grip"></span>
    <div class="side-tools side-sources">
      <button class="tool" type="button" aria-label="Add vector layer"><svg viewBox="0 0 24 24"><use href="#vector"/><use href="#plus"/></svg></button>
      <button class="tool" type="button" aria-label="Add raster layer"><svg viewBox="0 0 24 24"><use href="#raster"/><use href="#plus"/></svg></button>
      <button class="tool" type="button" aria-label="Add PostGIS layer"><svg viewBox="0 0 24 24"><use href="#elephant"/><use href="#plus"/></svg></button>
      <button class="tool" type="button" aria-label="Add SpatiaLite layer"><svg viewBox="0 0 24 24"><use href="#feather"/><use href="#plus"/></svg></button>
      <button class="tool" type="button" aria-label="Add MSSQL layer"><svg viewBox="0 0 24 24"><use href="#sail"/><use href="#plus"/></svg></button>
      <button class="tool" type="button" aria-label="Add Oracle layer"><svg viewBox="0 0 24 24"><use href="#oracle"/><use href="#plus"/></svg></button>
      <button class="tool" type="button" aria-label="Add GeoRaster layer"><svg viewBox="0 0 24 24"><use href="#georaster"/><use href="#plus"/></svg></button>
      <button class="tool" type="button" aria-label="Add WMS layer"><svg viewBox="0 0 24 24"><use href="#world"/><use href="#plus"/></svg></button>
      <button class="tool" type="button" aria-label="Add WCS layer"><svg viewBox="0 0 24 24"><use href="#globe-dark"/><use href="#plus"/></svg></button>
      <button class="tool" type="button" aria-label="Add WFS layer"><svg viewBox="0 0 24 24"><use href="#globe-v"/><use href="#plus"/></svg></button>
      <button class="tool" type="button" aria-label="Add delimited text layer"><svg viewBox="0 0 24 24"><path d="M5 6c0-5 9-5 9 1 0 5-3 8-7 10l-1-1c2-2 3.500-3.500 3.500-5.500C7 11 5 9.500 5 6z" fill="#4c7db3" stroke="#2f5580"/><use href="#plus"/></svg></button>
      <button class="tool" type="button" aria-label="Add virtual layer"><svg viewBox="0 0 24 24"><path d="M3 2.500h18.500v18H3z" fill="#b4cae3" stroke="#708fb1"/><path d="M5 4.500l5 12 6-12h4" fill="none" stroke="#354f6b" stroke-width="1.300"/><circle cx="10" cy="16.500" r="1.800" fill="#dce8f3" stroke="#354f6b"/><use href="#plus"/></svg></button>
      <div class="side-split">
        <button class="tool" type="button" aria-label="New vector layer"><svg viewBox="0 0 24 24"><use href="#vector"/><use href="#star"/></svg></button>
        <button class="drop drop-strong" type="button" aria-label="New layer types"></button>
      </div>
    </div>
    <span class="grip"></span>
    <div class="side-tools">
      <button class="tool" type="button" aria-label="Coordinate capture"><svg viewBox="0 0 24 24"><path d="M1 12h10M17 12h5M14 0v9M14 15v7M12 12h4M14 10v4" stroke="#444"/><path d="M10 10V8h2M16 8h2v2M18 14v2h-2M12 16h-2v-2" stroke="#d33" fill="none" stroke-width="1.300"/></svg></button>
      <button class="tool" type="button" aria-label="Trace tool"><svg viewBox="0 0 24 24"><path d="M10 5l-4 8 2 6M11 5l4 7M6 12l-1 5" fill="none" stroke="#666" stroke-width="1.300"/><circle cx="10.500" cy="5" r="2" fill="#eee" stroke="#666"/><rect x="13" y="13" width="9" height="9" rx="1" fill="#3d5a76"/><path d="M16 15h-1.500v5H16M21 17.500h-4M18.500 15.500l-2 2 2 2" stroke="#fff" fill="none"/></svg></button>
      <button class="tool" type="button" aria-label="Heat plugin"><svg viewBox="0 0 24 24"><path d="M1 2h22v20H1z" fill="#fff"/><path d="M12 10c1-2-2-3-1-5C14 1 22 5 21.500 12S14 22 8 19.500 0 8 4.500 5.500C8 4 9 6 8.500 8.500S11 12 12 10z" fill="#ec2c24" stroke="#30d048" stroke-width="2"/><path d="M13 8c4 0 4 4 1 6-3 1-6 0-7-3" fill="none" stroke="#79151b" stroke-width="1.500"/></svg></button>
      <button class="tool" type="button" aria-label="Note editor"><svg viewBox="0 0 24 24"><path d="M1.500 3.500h21v17h-21z" fill="#f8fafe" stroke="#5385c8"/><path d="M1 2.500h22V6H1z" fill="#5e98e2"/><path d="M4 10h7M4 13h5M4 16h6" stroke="#e46a5e" stroke-width="1.300"/><path d="M1 18.500h22V21H1z" fill="#477dc4"/><path d="M5 17l2-4L19 3l4 2L10 16z" fill="#eda63e" stroke="#a77022" stroke-width=".8"/></svg></button>
    </div>
  </aside>

  <div class="docks">
    <section class="dock dock-browser" aria-labelledby="browser-title">
      <header class="dock-title">
        <span class="grip"></span><h2 id="browser-title">Browser Panel</h2><span class="grip"></span>
        <button class="dock-button" type="button" aria-label="Float"><svg viewBox="0 0 12 12"><path d="M4.500 5V2.500h5v4H8M4 2.500h6" fill="none" stroke="#000" stroke-width="1.300"/><path d="M2.500 5.500h5v4h-5zM2 5.500h6" fill="#fff" stroke="#000" stroke-width="1.300"/></svg></button>
        <button class="dock-button" type="button" aria-label="Close"><svg viewBox="0 0 12 12"><path d="M2 2l8 8M10 2l-8 8" stroke="#000" stroke-width="1.600"/></svg></button>
      </header>
      <div class="dock-tools">
        <button class="mini" type="button" aria-label="Add selected layers"><svg viewBox="0 0 24 24"><path d="M3.500 3.500h16v16h-16z" fill="#f3f3f3" stroke="#777" stroke-width="1.500"/><path d="M15 15h8v8h-8z" fill="#5c9a61"/><path d="M19 16.500v5M16.500 19h5" stroke="#fff" stroke-width="1.500"/></svg></button>
        <button class="mini" type="button" aria-label="Refresh browser"><svg viewBox="0 0 24 24"><use href="#refresh"/></svg></button>
        <button class="mini" type="button" aria-label="Filter browser"><svg viewBox="0 0 24 24"><use href="#funnel"/></svg></button>
        <button class="mini" type="button" aria-label="Collapse tree"><svg viewBox="0 0 24 24"><use href="#rows"/><path d="M13 21V10h-4l7-8 7 8h-4v11z" fill="#5c88bb" stroke="#345c89"/></svg></button>
        <button class="mini" type="button" aria-label="Properties"><svg viewBox="0 0 24 24"><circle cx="12" cy="12" r="9.500" fill="#5b8ec6" stroke="#3f6da0"/><path d="M10.500 5h3.500v3h-3.500zM9 10h5v7h1.500v2H9v-2h1.500v-5H9z" fill="#fff"/></svg></button>
      </div>
      <ul class="tree" tabindex="-1">
        <li><span class="twig"><button class="expander" type="button" aria-label="Expand Home"></button></span><svg viewBox="0 0 24 21"><use href="#folder"/></svg><span class="name is-focused">Home</span></li>
        <li><span class="twig"></span><svg viewBox="0 0 24 21"><path d="M12 1l3 7 7.500.5-5.800 4.700 2 7.300L12 16l-6.700 4.500 2-7.300L1.500 8.500 9 8z" fill="#f3f4e8" stroke="#a7aa98" stroke-width="1.400"/></svg><span class="name">Favourites</span></li>
        <li><span class="twig"><button class="expander" type="button" aria-label="Expand C:/"></button></span><svg viewBox="0 0 24 21"><use href="#folder"/></svg><span class="name">C:/</span></li>
        <li><span class="twig"><button class="expander" type="button" aria-label="Expand D:/"></button></span><svg viewBox="0 0 24 21"><use href="#folder"/></svg><span class="name">D:/</span></li>
        <li><span class="twig"></span><svg viewBox="0 0 24 21"><use href="#folder"/></svg><span class="name">F:/</span></li>
        <li><span class="twig"><button class="expander" type="button" aria-label="Expand Z:/"></button></span><svg viewBox="0 0 24 21"><use href="#folder"/></svg><span class="name">Z:/</span></li>
        <li><span class="twig"></span><svg viewBox="0 0 24 21"><use href="#sail"/></svg><span class="name">MSSQL</span></li>
        <li><span class="twig"></span><svg viewBox="1 0 22 21"><use href="#oracle"/></svg><span class="name">Oracle</span></li>
        <li><span class="twig"><button class="expander" type="button" aria-label="Expand PostGIS"></button></span><svg viewBox="0 0 24 21"><use href="#elephant"/></svg><span class="name">PostGIS</span></li>
        <li><span class="twig"></span><svg viewBox="0 0 24 21"><use href="#feather"/></svg><span class="name">SpatiaLite</span></li>
        <li><span class="twig"><button class="expander" type="button" aria-label="Expand OWS"></button></span><svg viewBox="1 1 22 20"><use href="#globe-light"/></svg><span class="name">OWS</span></li>
        <li><span class="twig"></span><svg viewBox="1 1 22 20"><use href="#globe-dark"/></svg><span class="name">WCS</span></li>
        <li><span class="twig"><button class="expander" type="button" aria-label="Expand WFS"></button></span><svg viewBox="1 1 22 20"><use href="#globe-v"/></svg><span class="name">WFS</span></li>
        <li><span class="twig"><button class="expander" type="button" aria-label="Expand WMS"></button></span><svg viewBox="1 1 22 20"><use href="#world"/></svg><span class="name">WMS</span></li>
      </ul>
    </section>
    <span class="splitter"></span>
    <section class="dock dock-layers" aria-labelledby="layers-title">
      <header class="dock-title">
        <span class="grip"></span><h2 id="layers-title">Layers Panel</h2><span class="grip"></span>
        <button class="dock-button" type="button" aria-label="Float"><svg viewBox="0 0 12 12"><path d="M4.500 5V2.500h5v4H8M4 2.500h6" fill="none" stroke="#000" stroke-width="1.300"/><path d="M2.500 5.500h5v4h-5zM2 5.500h6" fill="#fff" stroke="#000" stroke-width="1.300"/></svg></button>
        <button class="dock-button" type="button" aria-label="Close"><svg viewBox="0 0 12 12"><path d="M2 2l8 8M10 2l-8 8" stroke="#000" stroke-width="1.600"/></svg></button>
      </header>
      <div class="dock-tools">
        <button class="mini" type="button" aria-label="Add group"><svg viewBox="0 0 24 24"><path d="M7 6h10v13M3 10h4v10H3zM7 5v14h9V3z" fill="#eee" stroke="#6f7b80" stroke-width="1.500"/><path d="M12 3v15M17 9h4v6" fill="none" stroke="#6f7b80" stroke-width="1.500"/><path d="M15 15h8v8h-8z" fill="#5c9a61"/><path d="M19 16.500v5M16.500 19h5" stroke="#fff" stroke-width="1.500"/></svg></button>
        <button class="mini" type="button" aria-label="Layer visibility"><svg viewBox="0 0 24 24"><path d="M1 12q10-12 20 0-10 9-20 0z" fill="#e8edf2" stroke="#909ba6" stroke-width="1.500"/><circle cx="11" cy="11" r="4.500" fill="#4e79a8"/><circle cx="11" cy="11" r="2" fill="#1b2c40"/><path d="M16 19h8l-4 4z" fill="#000"/></svg></button>
        <button class="mini" type="button" aria-label="Filter legend"><svg viewBox="0 0 24 24"><use href="#funnel"/></svg></button>
        <button class="mini" type="button" aria-label="Filter by expression" disabled><svg viewBox="0 0 24 24"><path d="M11 4C7 1 2 3 3 7c.5 2 3 3 5 2-4 0-7 2-6 5s7 4 9 1" fill="none" stroke="#aaa" stroke-width="2"/><path d="M14 22v-8h7v8M17 12v5" fill="none" stroke="#aaa" stroke-width="2"/></svg></button>
        <button class="drop" type="button" aria-label="Expression filters" disabled></button>
        <button class="mini" type="button" aria-label="Expand all"><svg viewBox="0 0 24 24"><use href="#rows"/><path d="M13 3v11H9l7 8 7-8h-4V3z" fill="#5c88bb" stroke="#345c89"/></svg></button>
        <button class="mini" type="button" aria-label="Collapse all"><svg viewBox="0 0 24 24"><use href="#rows"/><path d="M13 21V10h-4l7-8 7 8h-4v11z" fill="#5c88bb" stroke="#345c89"/></svg></button>
        <button class="more" type="button" aria-label="More tools">»</button>
      </div>
      <ul class="layers">
        <li><button class="expander is-open" type="button" aria-label="Collapse Weeds"></button><input class="check" id="weeds" type="checkbox" checked><svg viewBox="0 0 16 16"><path d="M0 0h16v16H0z" fill="#5c96d6"/><path d="M0 0h4v4H0zM8 0h4v4H8zM4 4h4v4H4zM12 4h4v4h-4zM8 8h4v4H8zM0 12h4v4H0z" fill="#2d5479"/><path d="M12 8h4v8h-4z" fill="#efefef"/></svg><label for="weeds">Weeds</label></li>
      </ul>
    </section>
  </div>
  <span class="dock-edge"></span>

  <div class="canvas" role="img" aria-label="Weeds map">
    <svg class="marker marker-a" viewBox="0 0 14 15"><use href="#grass"/></svg>
    <svg class="marker marker-b" viewBox="0 0 14 15"><use href="#grass"/></svg>
    <svg class="marker marker-c" viewBox="0 0 14 15"><use href="#grass"/></svg>
    <svg class="marker marker-d" viewBox="0 0 14 15"><use href="#grass"/></svg>
  </div>
</main>
</body>
</html>
```
FILE: styles.css
```css
* { box-sizing: border-box; }

html, body { height: 100%; }

body {
  margin: 0;
  display: flex;
  flex-direction: column;
  overflow: hidden;
  background: #efefef;
  color: #000;
  font: 9px/12px "Noto Sans", "DejaVu Sans", sans-serif;
}

button {
  flex: none;
  margin: 0;
  padding: 0;
  border: 0;
  background: none;
  color: inherit;
  font: inherit;
}

svg { display: block; flex: none; }
.sprite { position: absolute; width: 0; height: 0; }
.glyph { font-family: "Noto Sans", sans-serif; }
.glyph-bold { font-weight: 700; }
.glyph-serif { font: italic 700 13px "Liberation Serif", serif; }
.faded { filter: grayscale(1); opacity: .6; }
.grey { filter: grayscale(1); opacity: .6; }

/* Menu bar */
.menubar {
  flex: none;
  display: flex;
  gap: 11px;
  height: 18px;
  padding-left: 5px;
  border-bottom: 1px solid #d2d2d2;
}

/* Toolbars */
.toolbar-row {
  flex: none;
  display: flex;
  align-items: center;
  height: 33px;
  overflow: hidden;
  border-bottom: 1px solid #bdbdbd;
}

.handle {
  flex: none;
  width: 4px;
  height: 24px;
  margin: 0 1px 0 7px;
  background: radial-gradient(circle at 1px 1px, #c6c6c6 1px, transparent 1px) 0 0 / 4px 4px,
              radial-gradient(circle at 3px 3px, #dadada 1px, transparent 1px) 0 0 / 4px 4px;
}
.handle:first-child { margin-left: 2px; }

.tools { flex: none; display: flex; justify-content: space-between; align-items: center; }
.tools-file { width: 176px; }
.tools-navigation { width: 351px; }
.tools-digitize { width: 332px; }
.tools-labels { width: 206px; }
.tools-plugins { width: 176px; }
.tools-advanced { width: 528px; }

.tool {
  display: flex;
  align-items: center;
  justify-content: center;
  width: 29px;
  height: 28px;
}
.tool svg { width: 24px; height: 24px; overflow: visible; }
.tool:disabled svg { opacity: .8; }
.tool.is-active {
  border: 1px solid #8d8d8d;
  border-radius: 2px;
  background: #d5d5d5;
}

.drop { width: 11px; height: 28px; }
.drop::before {
  content: "";
  display: block;
  margin: 0 auto;
  width: 0;
  border: 4px solid transparent;
  border-top-color: #8e8e8e;
  border-bottom: 0;
}
.drop-strong::before { border-top-color: #000; }

.rule { width: 1px; height: 26px; margin: 0 1px; background: #c2c2c2; }

/* Work area */
.workspace { flex: 1; display: flex; min-height: 0; overflow: hidden; }

.sidebar {
  flex: none;
  width: 41px;
  padding-top: 5px;
  border-right: 1px solid #b9b9b9;
}

.grip {
  display: block;
  flex: 1;
  height: 4px;
  background: radial-gradient(circle at 1px 1px, #c9c9c9 1px, transparent 1px) 0 0 / 4px 4px,
              radial-gradient(circle at 3px 3px, #d6d6d6 1px, transparent 1px) 0 0 / 4px 4px;
}
.sidebar .grip { margin: 0 4px 0 2px; }

.side-tools { display: flex; flex-direction: column; padding-left: 5px; }
.side-tools .tool svg { width: 22px; height: 22px; }
.side-sources { justify-content: space-between; height: 378px; padding-bottom: 8px; }
.side-split { display: flex; margin-left: -5px; }

.docks { flex: none; display: flex; flex-direction: column; width: 172px; }
.dock { display: flex; flex-direction: column; }
.dock-browser { height: 418px; }
.dock-layers { flex: 1; }

.dock-title { flex: none; display: flex; align-items: center; gap: 2px; height: 14px; padding: 0 1px 0 3px; }
.dock-title h2 { margin: 0 5px; font-size: 8px; font-weight: 400; line-height: 12px; }

.dock-button { width: 11px; height: 11px; border: 1px solid #777; border-radius: 2px; background: #f6f6f6; }
.dock-button svg { width: 9px; height: 9px; }

.dock-tools { flex: none; display: flex; align-items: center; height: 30px; padding-left: 1px; }
.dock-tools .drop { width: 9px; height: 12px; }
.mini { display: flex; align-items: center; justify-content: center; width: 23px; height: 20px; }
.mini svg { width: 14px; height: 14px; }
.more { margin-left: auto; padding-right: 3px; font-size: 12px; font-weight: 700; }

/* Trees */
.tree, .layers { margin: 0; padding: 0; list-style: none; background: #fff; }

.tree {
  flex: 1;
  margin: 3px 0 0 0;
  padding-left: 3px;
  border: 2px solid #4a9df0;
  border-right-width: 1px;
}
.tree li { display: flex; align-items: center; height: 13px; }
.tree li:nth-child(even) { height: 14px; }
.tree li svg { width: 16px; height: 14px; }

.twig {
  display: flex;
  align-items: center;
  align-self: stretch;
  flex: none;
  width: 15px;
  background: linear-gradient(#aaa 50%, transparent 50%) 4px 0 / 1px 2px repeat-y,
              linear-gradient(90deg, #aaa 50%, transparent 50%) 5px 50% / 2px 1px repeat-x;
}
.tree li:first-child .twig,
.tree li:last-child .twig {
  background: linear-gradient(90deg, #aaa 50%, transparent 50%) 5px 50% / 2px 1px repeat-x;
}

.expander {
  width: 9px;
  height: 9px;
  border: 1px solid #a2a2a2;
  background: linear-gradient(#666, #666) center / 5px 1px no-repeat,
              linear-gradient(#666, #666) center / 1px 5px no-repeat, #fff;
}
.expander.is-open { background: linear-gradient(#666, #666) center / 5px 1px no-repeat, #fff; }

.name { margin-left: 1px; padding: 0 1px; line-height: 12px; }
.name.is-focused { width: 46px; outline: 1px dotted #222; outline-offset: -1px; }

.splitter {
  flex: none;
  align-self: center;
  width: 52px;
  height: 4px;
  margin: 1px 0;
  background: radial-gradient(circle at 2px 2px, #c4c4c4 1px, transparent 1px) 0 0 / 4px 4px;
}

.layers { flex: 1; margin-top: 4px; border: 1px solid #a9a9a9; border-bottom: 0; }
.layers li { display: flex; align-items: center; height: 14px; padding-left: 4px; background: #efefef; }
.layers svg { width: 14px; height: 14px; margin: 0 5px; }
.layers label { font-size: 10px; font-weight: 700; text-decoration: underline; }

.check {
  appearance: none;
  flex: none;
  width: 10px;
  height: 10px;
  margin: 0 0 0 7px;
  border: 1px solid #ccc;
  background: #fff;
}
.check:checked {
  background: linear-gradient(45deg, transparent 38%, #000 38%, #000 62%, transparent 62%),
              linear-gradient(-45deg, transparent 38%, #000 38%, #000 62%, transparent 62%), #fff;
}

.dock-edge {
  flex: none;
  width: 6px;
  border-right: 1px solid #aaa;
}
.dock-edge::before {
  content: "";
  display: block;
  height: 230px;
  margin-top: 230px;
  background: radial-gradient(circle at 2px 2px, #c4c4c4 1px, transparent 1px) 1px 0 / 4px 4px repeat-y;
}

/* Map */
.canvas { position: relative; flex: 1; background: #fff; border-top: 1px solid #c9c9c9; }
.marker { position: absolute; width: 13px; height: 14px; }
.marker-a { left: 319px; top: 106px; fill: #0c8c86; }
.marker-b { left: 316px; top: 176px; fill: #e8868a; }
.marker-c { left: 290px; top: 325px; fill: #e8868a; }
.marker-d { left: 342px; top: 365px; fill: #e3dc1c; }
```
